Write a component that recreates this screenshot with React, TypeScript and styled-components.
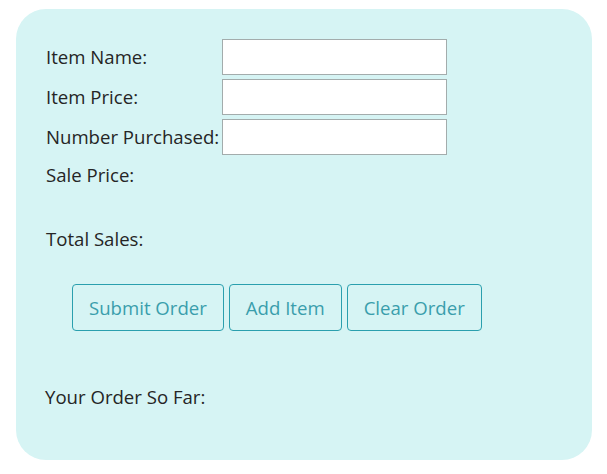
import { Fragment } from "react";
import styled, { createGlobalStyle } from "styled-components";

const GlobalStyle = createGlobalStyle`
  body {
    margin: 0;
    background: #ffffff;
    font-family: "Open Sans", "Noto Sans", sans-serif;
    color: #252525;
  }
`;

const Panel = styled.div`
  box-sizing: border-box;
  width: 576px;
  height: 451px;
  margin: 9px 0 0 16px;
  padding: 30px 30px 0 30px;
  background: #d6f4f4;
  border-radius: 30px;
`;

const FormGrid = styled.div`
  display: grid;
  grid-template-columns: 176px 225px;
  grid-auto-rows: 36px;
  row-gap: 4px;
  align-items: center;
`;

const Label = styled.label`
  font-size: 18.6px;
  line-height: 26px;
  white-space: nowrap;
`;

const Input = styled.input`
  box-sizing: border-box;
  width: 225px;
  height: 36px;
  margin: 0;
  border: 1px solid #a3acac;
  background: #ffffff;
  font-family: inherit;
  font-size: 16px;
  padding: 2px 6px;
  outline: none;
`;

const Line = styled.div<{ $top: number; $shift?: number }>`
  margin-top: ${(p) => p.$top}px;
  margin-left: ${(p) => p.$shift ?? 0}px;
  font-size: 18.6px;
  line-height: 24px;
`;

const ButtonRow = styled.div`
  display: flex;
  gap: 5px;
  margin: 33px 0 0 26px;
`;

const Button = styled.button`
  box-sizing: border-box;
  height: 47px;
  padding: 0 16px;
  background: transparent;
  border: 1px solid #2a9fae;
  border-radius: 4px;
  color: #3a9eac;
  font-family: inherit;
  font-size: 18.6px;
  cursor: pointer;
`;

const fields = ["Item Name:", "Item Price:", "Number Purchased:"];

export default function App() {
  return (
    <>
      <GlobalStyle />
      <Panel>
        <FormGrid>
          {fields.map((f) => (
            <Fragment key={f}>
              <Label>{f}</Label>
              <Input type="text" />
            </Fragment>
          ))}
        </FormGrid>
        <Line $top={8}>Sale Price:</Line>
        <Line $top={40}>Total Sales:</Line>
        <ButtonRow>
          <Button>Submit Order</Button>
          <Button>Add Item</Button>
          <Button>Clear Order</Button>
        </ButtonRow>
        <Line $top={54} $shift={-1}>
          Your Order So Far:
        </Line>
      </Panel>
    </>
  );
}
